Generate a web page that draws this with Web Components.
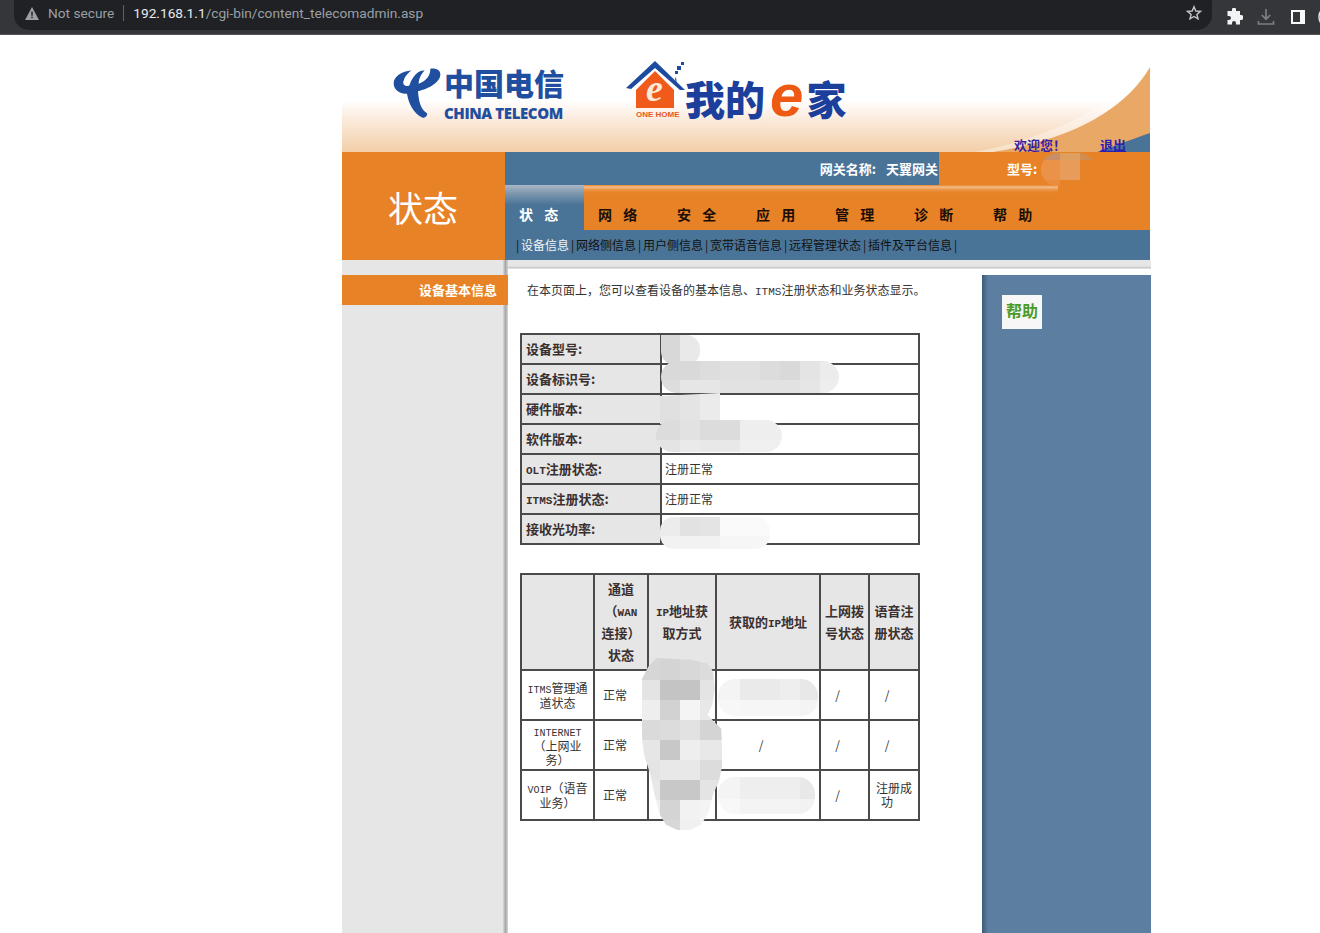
<!DOCTYPE html>
<html lang="zh">
<head>
<meta charset="utf-8">
<title>content_telecomadmin</title>
<style>
  html, body { margin: 0; height: 933px; overflow: hidden; background: #fff; }
  body { font: 12px "Noto Sans CJK SC", sans-serif; color: #333; }
</style>
</head>
<body>
<browser-bar></browser-bar>
<gateway-page>
  <page-banner></page-banner>
  <page-nav title-text="状态" gateway="天翼网关"></page-nav>
  <page-body>
    <side-item slot="side">设备基本信息</side-item>
    <info-table data-rows='[["设备型号:",""],["设备标识号:",""],["硬件版本:",""],["软件版本:",""],["OLT注册状态:","注册正常"],["ITMS注册状态:","注册正常"],["接收光功率:",""]]'></info-table>
    <wan-table></wan-table>
    <help-box slot="help">帮助</help-box>
  </page-body>
</gateway-page>

<blur-patch x="661" y="335" cols="19 20" rows="30" shades="d8 e9" shape="inset(0 round 0 14px 14px 14px)"></blur-patch>
<blur-patch x="661" y="361" cols="19 20 20 20 20 20 20 20 19" rows="19 13" shades="d9 d9 dd e0 e0 dc d9 e4 ec dd e6 e6 e2 e2 e2 e2 e6 ee" shape="inset(0 round 16px)"></blur-patch>
<blur-patch x="660" y="393" cols="20 20 20" rows="31" shades="e0 e4 eb" shape="polygon(0 10%,100% 0,100% 100%,0 100%)"></blur-patch>
<blur-patch x="656" y="420" cols="24 20 20 20 42" rows="20 12" shades="dc e2 dc dc ee e4 ea e8 e8 f0" shape="inset(0 round 16px)"></blur-patch>
<blur-patch x="660" y="517" cols="20 20 20 50" rows="19 13" shades="ec e2 e4 fa f2 f2 f2 f6" shape="inset(0 round 14px)"></blur-patch>

<blur-patch x="642" y="658" cols="18 20 20 20 2" rows="22 20 20 20 20 20 20 20 10" shades="d6 d4 d8 dc dc e4 c4 c4 e4 e4 ee d2 f4 e8 e8 da dc e2 d4 d4 e6 c8 ee e8 e8 e4 e8 e8 dc dc e8 c8 c8 e4 e4 f0 d4 f2 f4 f4 f0 d8 f0 f4 f4" shape="polygon(18% 0,60% 1%,82% 3%,89% 8%,91% 18%,88% 27%,82% 33%,90% 37%,99% 41%,100% 52%,100% 63%,96% 72%,89% 79%,83% 90%,74% 97%,60% 100%,44% 100%,30% 97%,22% 91%,16% 80%,10% 67%,3% 57%,0 47%,0 12%,8% 5%)"></blur-patch>
<blur-patch x="718" y="679" cols="22 40 20 18" rows="21 16" shades="f4 ea ee e8 f7 f6 f6 f4" shape="inset(0 round 17px)"></blur-patch>
<blur-patch x="718" y="777" cols="22 40 20 15" rows="22 15" shades="f4 ee ee e8 f8 f4 f4 f2" shape="inset(0 round 17px)"></blur-patch>
<blur-patch x="1041" y="153" cols="19 20 15" rows="7 20 6" shades="c88e68 dfa05f d08c52 e99248 e89c5c e88226 e98e3e e88226 e88226" shape="inset(0 round 18px)"></blur-patch>

<script>
// latin runs are narrower than the cjk font's own latin, same as the router's simsun
const lat = s => s.split('<br>').map(p => p.replace(/[A-Za-z]+/g, m => `<span class="l">${m}</span>`)).join('<br>');
const LAT_CSS = `.l { font-family: "Liberation Mono", monospace; font-size: 10px; line-height: 1; }`;

class BrowserBar extends HTMLElement {
  connectedCallback() {
    this.attachShadow({ mode: 'open' }).innerHTML = `
      <style>
        :host { display: flex; height: 35px; overflow: hidden; background: #35363a; box-sizing: border-box; border-bottom: 1px solid #55565a; align-items: flex-start; font: 13.7px Roboto, "Noto Sans", sans-serif; }
        .box { margin-left: 14px; flex: none; width: 1198px; height: 30px; box-sizing: border-box; background: #202124; border-radius: 0 0 15px 15px; display: flex; align-items: center; padding: 0 10px 4px 11px; color: #9aa0a6; }
        .warn { width: 14px; height: 13px; margin-right: 9px; }
        .sep { width: 1px; height: 16px; background: #5f6368; margin: 0 9px 0 9px; }
        .host { color: #e8eaed; }
        .star { margin-left: auto; width: 16px; height: 16px; }
        .tools { display: flex; flex: none; align-items: center; gap: 14px; padding: 5px 0 0 13px; }
        .tools svg { width: 18px; height: 18px; display: block; flex: none; }
        .tools svg.me { width: 24px; height: 24px; margin-left: -3px; }
      </style>
      <div class="box">
        <svg class="warn" viewBox="0 0 14 13"><path fill="#9aa0a6" d="M7 0 14 13H0Z"/><path fill="#202124" d="M6.3 4.5h1.4v4.2H6.3zM6.3 9.8h1.4v1.4H6.3z"/></svg>
        <span>Not secure</span><span class="sep"></span>
        <span><span class="host">192.168.1.1</span>/cgi-bin/content_telecomadmin.asp</span>
        <svg class="star" viewBox="0 0 16 16"><path fill="none" stroke="#c4c7c9" stroke-width="1.4" d="M8 1.7 9.8 6l4.6.4-3.5 3 1.1 4.5L8 11.5l-4 2.4 1.1-4.5-3.5-3L6.200 6Z"/></svg>
      </div>
      <div class="tools">
        <svg viewBox="0 0 18 18"><path fill="#f1f3f4" d="M7 1.500a2 2 0 0 1 4 0V3h4v4h1a2 2 0 0 1 0 5h-1v4.500h-4V15a2 2 0 0 0-4 0v1.500H2.500V12H4a2 2 0 0 0 0-4H2.500V3H7Z"/></svg>
        <svg viewBox="0 0 18 18"><path fill="none" stroke="#7b7e82" stroke-width="1.700" d="M9 1v10M4.800 7 9 11.200 13.200 7M1.500 13v3h15v-3"/></svg>
        <svg viewBox="0 0 18 18"><path fill="#f8f9fa" fill-rule="evenodd" d="M2 2h14v14H2ZM4 4v10h7V4Z"/></svg>
        <svg class="me" viewBox="0 0 24 24"><circle cx="12" cy="12" r="11" fill="#202124" stroke="#e8eaed" stroke-width="1.500"/></svg>
      </div>`;
  }
}

class GatewayPage extends HTMLElement {
  connectedCallback() {
    this.attachShadow({ mode: 'open' }).innerHTML = `
      <style>:host { display: block; width: 809px; margin-left: 342px; }</style>
      <slot></slot>`;
  }
}

class PageBanner extends HTMLElement {
  connectedCallback() {
    this.attachShadow({ mode: 'open' }).innerHTML = `
      <style>
        :host { display: flex; position: relative; width: 808px; height: 117px; box-sizing: border-box; padding: 25px 0 0 50px;
                background: linear-gradient(#fff 0, #fff 65px, #fbeadb 85px, #f3cfa8 117px); }
        .curve { position: absolute; left: 0; top: 0; }
        .telecom { display: grid; grid-template-columns: 52px auto; width: 172px; height: 60px; margin-top: 7px; flex: none; }
        .telecom svg { grid-row: 1 / 3; width: 50px; height: 52px; }
        .cn { font: 900 30px/33px "Noto Sans CJK SC", sans-serif; color: #1f4f9e; white-space: nowrap; margin-top: -1px; }
        .en { font: 800 15px/14px "Open Sans", sans-serif; color: #1f4f9e; white-space: nowrap; margin-top: -1px; letter-spacing: -.4px; }
        .home { position: relative; flex: none; width: 62px; height: 62px; margin-left: 62px; }
        .home svg { display: block; width: 62px; height: 62px; }
        .one { position: absolute; left: 10px; top: 50px; font: 700 8px/9px "Liberation Sans", sans-serif; color: #e8581c; white-space: nowrap; }
        .eh { position: absolute; left: 20px; top: 10px; font: italic 700 38px/36px "Liberation Serif", serif; color: #fbe9dc; }
        .word { display: flex; align-items: center; height: 40px; margin: 18px 0 0 -3px; flex: none; color: #1c3f9c; font: 900 40px/40px "Noto Sans CJK SC", sans-serif; white-space: nowrap; }
        .word i { font: italic 900 60px/40px "Liberation Sans", sans-serif; color: #ee5a14; margin: -4px 3px 0 5px; }
        .word b { font-weight: 900; }
        .welcome { position: absolute; left: 672px; top: 102px; font: 700 13px/15px "Noto Sans CJK SC", sans-serif; color: #3b1fa0; white-space: nowrap; }
        .out { position: absolute; left: 758px; top: 102px; font: 700 13px/15px "Noto Sans CJK SC", sans-serif; color: #2a1fb0; text-decoration: underline; }
      </style>
      <svg class="curve" width="808" height="117" viewBox="342 35 808 117">
        <path fill="#fff" d="M1150 50C1130 100 1060 135 975 152H1150Z" opacity=".35"/>
        <path fill="#e9a866" d="M1150 67C1128 105 1080 138 993 152H1150Z"/>
        <path fill="#4a7497" d="M1150 133C1130 140 1112 147 1097 152H1150Z"/>
      </svg>
      <div class="telecom">
        <svg viewBox="20 20 150 155"><path fill="#1f4f9e" d="M78 30C50 32 25 48 25 68 25 90 45 100 65 100 70 130 85 160 112 172 120 172 127 165 125 158 108 148 100 125 98 92 130 85 165 65 165 42 165 28 150 22 135 25 135 45 125 60 100 70 100 55 108 40 118 30 100 28 82 45 72 75 60 80 50 72 55 60 58 48 68 38 78 30Z"/></svg>
        <div class="cn">中国电信</div>
        <div class="en">CHINA TELECOM</div>
      </div>
      <div class="home">
        <svg viewBox="0 0 62 62">
          <path fill="#f05a1a" d="M10 30 29 11 48 30V48H10Z"/>
          <path fill="#1c4ba0" d="M0 28 29 1 59 30 54 30 29 8 5 29Z"/>
          <path fill="#1c4ba0" d="M49 19 51 26 50 17Z M51 6h4v4h-4ZM55 2h3v3h-3ZM49 11h3v3h-3Z"/>
        </svg>
        <span class="eh">e</span>
        <span class="one">ONE HOME</span>
      </div>
      <div class="word"><b>我的</b><i>e</i><b>家</b></div>
      <span class="welcome">欢迎您！</span>
      <a class="out">退出</a>`;
  }
}

class NavTab extends HTMLElement {
  connectedCallback() {
    this.attachShadow({ mode: 'open' }).innerHTML = `
      <style>
        :host { display: block; width: 79px; height: 45px; box-sizing: border-box; padding: 20px 0 0 14px; font: 700 14px/18px "Noto Sans CJK SC", sans-serif; color: #1a0d05; word-spacing: 8px; white-space: nowrap;
                background: linear-gradient(#e8822a 0, #f4bd8b 2px, #eb9140 5px, #e88226 8px); }
        :host([active]) { color: #fff; background: linear-gradient(#a9b8c7 0, #7f98ae 8px, #4a7497 20px); }
      </style>
      <slot></slot>`;
  }
}

class PageNav extends HTMLElement {
  connectedCallback() {
    const links = ['设备信息', '网络侧信息', '用户侧信息', '宽带语音信息', '远程管理状态', '插件及平台信息'];
    this.attachShadow({ mode: 'open' }).innerHTML = `
      <style>
        :host { display: grid; grid-template-columns: 163px 645px; grid-template-rows: 33px 45px 30px; height: 108px; }
        .title { grid-row: 1 / 4; background: #e88226; color: #fff; font: 400 35px/1 "Noto Sans CJK SC", sans-serif; display: flex; justify-content: center; align-items: center; padding-right: 1px; }
        .info { display: grid; grid-template-columns: 434px 1fr; color: #fff; font-weight: 700; font-size: 13px; line-height: 33px; }
        .gw { background: #4a7497; display: flex; justify-content: flex-end; gap: 10px; padding-right: 1px; }
        .model { background: #e88226; padding-left: 68px; }
        .tabs { display: flex; background: #e88226; }
        .links { background: #4a7497; padding-left: 9px; display: flex; align-items: center; color: #111; white-space: nowrap; line-height: 30px; }
        .links i { font-style: normal; flex: none; width: 7px; text-align: center; }
        .links span.on { color: #f0f4f8; }
      </style>
      <div class="title">${this.getAttribute('title-text')}</div>
      <div class="info">
        <div class="gw"><span>网关名称:</span><span>${this.getAttribute('gateway')}</span></div>
        <div class="model">型号:</div>
      </div>
      <div class="tabs">
        <nav-tab active>状 态</nav-tab>
        <nav-tab>网 络</nav-tab><nav-tab>安 全</nav-tab><nav-tab>应 用</nav-tab>
        <nav-tab>管 理</nav-tab><nav-tab>诊 断</nav-tab><nav-tab>帮 助</nav-tab>
      </div>
      <div class="links"><i>|</i>${links.map((t, n) => `<span class="${n ? '' : 'on'}">${t}</span><i>|</i>`).join('')}</div>`;
  }
}

class PageBody extends HTMLElement {
  connectedCallback() {
    this.attachShadow({ mode: 'open' }).innerHTML = `
      <style>
        :host { display: grid; grid-template-columns: 163px 477px 169px; height: 673px; background: #e6e6e6; }
        .side { padding-top: 15px; }
        .main { position: relative; background: #fff; padding: 9px 0 0 3px; }
        .main::before { content: ""; position: absolute; left: -2px; top: 0; right: -169px; height: 9px; background: linear-gradient(#e6e6e6 6px, #c6c6c6 8px, #f4f4f4 9px); }
        .main::after { content: ""; position: absolute; left: -2px; top: 0; bottom: 0; width: 5px; background: linear-gradient(90deg, #d8d8d8, #a8a8a8 50%, #d6d6d6); }
        .content { padding: 0 0 0 12px; }
        .desc { padding: 12px 0 0 7px; line-height: 18px; color: #333; white-space: nowrap; height: 64px; box-sizing: border-box; }
        .help { background: #fff; }
        .panel { margin-top: 15px; height: 658px; box-sizing: border-box; padding: 20px 0 0 20px; background: linear-gradient(90deg, #3e5a78, #5b7ea1 6px); }
        ${LAT_CSS}
        .desc .l { font-size: 11px; }
      </style>
      <div class="side"><slot name="side"></slot></div>
      <div class="main"><div class="content">
        <div class="desc">${lat('在本页面上，您可以查看设备的基本信息、ITMS注册状态和业务状态显示。')}</div>
        <slot></slot>
      </div></div>
      <div class="help"><div class="panel"><slot name="help"></slot></div></div>`;
  }
}

class SideItem extends HTMLElement {
  connectedCallback() {
    this.attachShadow({ mode: 'open' }).innerHTML = `
      <style>:host { display: block; position: relative; z-index: 1; width: 166px; height: 30px; box-sizing: border-box; padding-right: 11px; background: #e88226; color: #fff; font-size: 13px; font-weight: 700; line-height: 30px; text-align: right; }</style>
      <slot></slot>`;
  }
}

class HelpBox extends HTMLElement {
  connectedCallback() {
    this.attachShadow({ mode: 'open' }).innerHTML = `
      <style>:host { display: block; width: 40px; height: 34px; background: #f7f7f7; color: #4c9a2a; font: 700 16px/31px "Noto Sans CJK SC", sans-serif; text-align: center; }</style>
      <slot></slot>`;
  }
}

const TABLE_CSS = `
  table { border-collapse: collapse; table-layout: fixed; border: 2px solid #4a4a4a; }
  td, th { border: 2px solid #4a4a4a; padding: 0; color: #333; overflow: hidden; }
  .head { background: #e6e6e6; font-size: 13px; font-weight: 700; color: #3a3030; }
  ${LAT_CSS}
  .head .l { font-size: 11px; }`;

class InfoTable extends HTMLElement {
  connectedCallback() {
    const rows = JSON.parse(this.getAttribute('data-rows') || '[]');
    this.attachShadow({ mode: 'open' }).innerHTML = `
      <style>
        :host { display: block; width: 400px; margin-bottom: 28px; }
        ${TABLE_CSS}
        table { width: 400px; }
        td { height: 28px; line-height: 26px; text-align: left; padding-left: 3px; white-space: nowrap; }
        td.head { padding-left: 4px; }
      </style>
      <table><colgroup><col style="width:140px"><col></colgroup>
        ${rows.map(r => `<tr><td class="head">${lat(r[0])}</td><td>${r[1]}</td></tr>`).join('')}
      </table>`;
  }
}

class WanTable extends HTMLElement {
  connectedCallback() {
    const no = '<span class="pad">/</span>';
    const head = ['', '通道<br>（WAN<br>连接）<br>状态', 'IP地址获<br>取方式', '获取的IP地址', '上网拨<br>号状态', '语音注<br>册状态'];
    const rows = [
      [lat('ITMS管理通<br>道状态'), '正常', '', '', no, no],
      [lat('INTERNET<br>（上网业<br>务）'), '正常', '', no, no, no],
      [lat('VOIP（语音<br>业务）'), '正常', '', '', no, '注册成<br><span class="pad">功</span>']
    ];
    this.attachShadow({ mode: 'open' }).innerHTML = `
      <style>
        :host { display: block; width: 400px; }
        ${TABLE_CSS}
        table { width: 400px; }
        th { height: 94px; line-height: 22px; }
        td { height: 48px; line-height: 14px; text-align: center; padding: 0 5px; white-space: nowrap; }
        td.ok { text-align: left; padding-left: 8px; }
        .pad { padding-right: 14px; }
      </style>
      <table>
        <colgroup><col style="width:73px"><col style="width:54px"><col style="width:68px"><col style="width:104px"><col style="width:49px"><col style="width:50px"></colgroup>
        <tr>${head.map(h => `<th class="head">${lat(h)}</th>`).join('')}</tr>
        ${rows.map(r => `<tr>${r.map((c, n) => `<td class="${n == 1 ? 'ok' : ''}">${c}</td>`).join('')}</tr>`).join('')}
      </table>`;
  }
}

// mosaic the owner of the screenshot put over private values, sits over the page
class BlurPatch extends HTMLElement {
  connectedCallback() {
    const attr = n => this.getAttribute(n);
    const cols = attr('cols').split(' ');
    const rows = attr('rows').split(' ');
    const shades = attr('shades').split(' ');
    const w = cols.reduce((a, b) => a + +b, 0);
    const h = rows.reduce((a, b) => a + +b, 0);
    const colour = s => s.length == 2 ? `#${s}${s}${s}` : `#${s}`;
    this.attachShadow({ mode: 'open' }).innerHTML = `
      <style>
        :host { display: grid; position: absolute; left: ${attr('x')}px; top: ${attr('y')}px; width: ${w}px; height: ${h}px;
                grid-template-columns: ${cols.map(c => c + 'px').join(' ')}; grid-template-rows: ${rows.map(r => r + 'px').join(' ')};
                clip-path: ${attr('shape')}; }
      </style>
      ${shades.map(s => `<div style="background:${colour(s)}"></div>`).join('')}`;
  }
}

customElements.define('browser-bar', BrowserBar);
customElements.define('gateway-page', GatewayPage);
customElements.define('page-banner', PageBanner);
customElements.define('nav-tab', NavTab);
customElements.define('page-nav', PageNav);
customElements.define('page-body', PageBody);
customElements.define('side-item', SideItem);
customElements.define('help-box', HelpBox);
customElements.define('info-table', InfoTable);
customElements.define('wan-table', WanTable);
customElements.define('blur-patch', BlurPatch);
</script>
</body>
</html>
